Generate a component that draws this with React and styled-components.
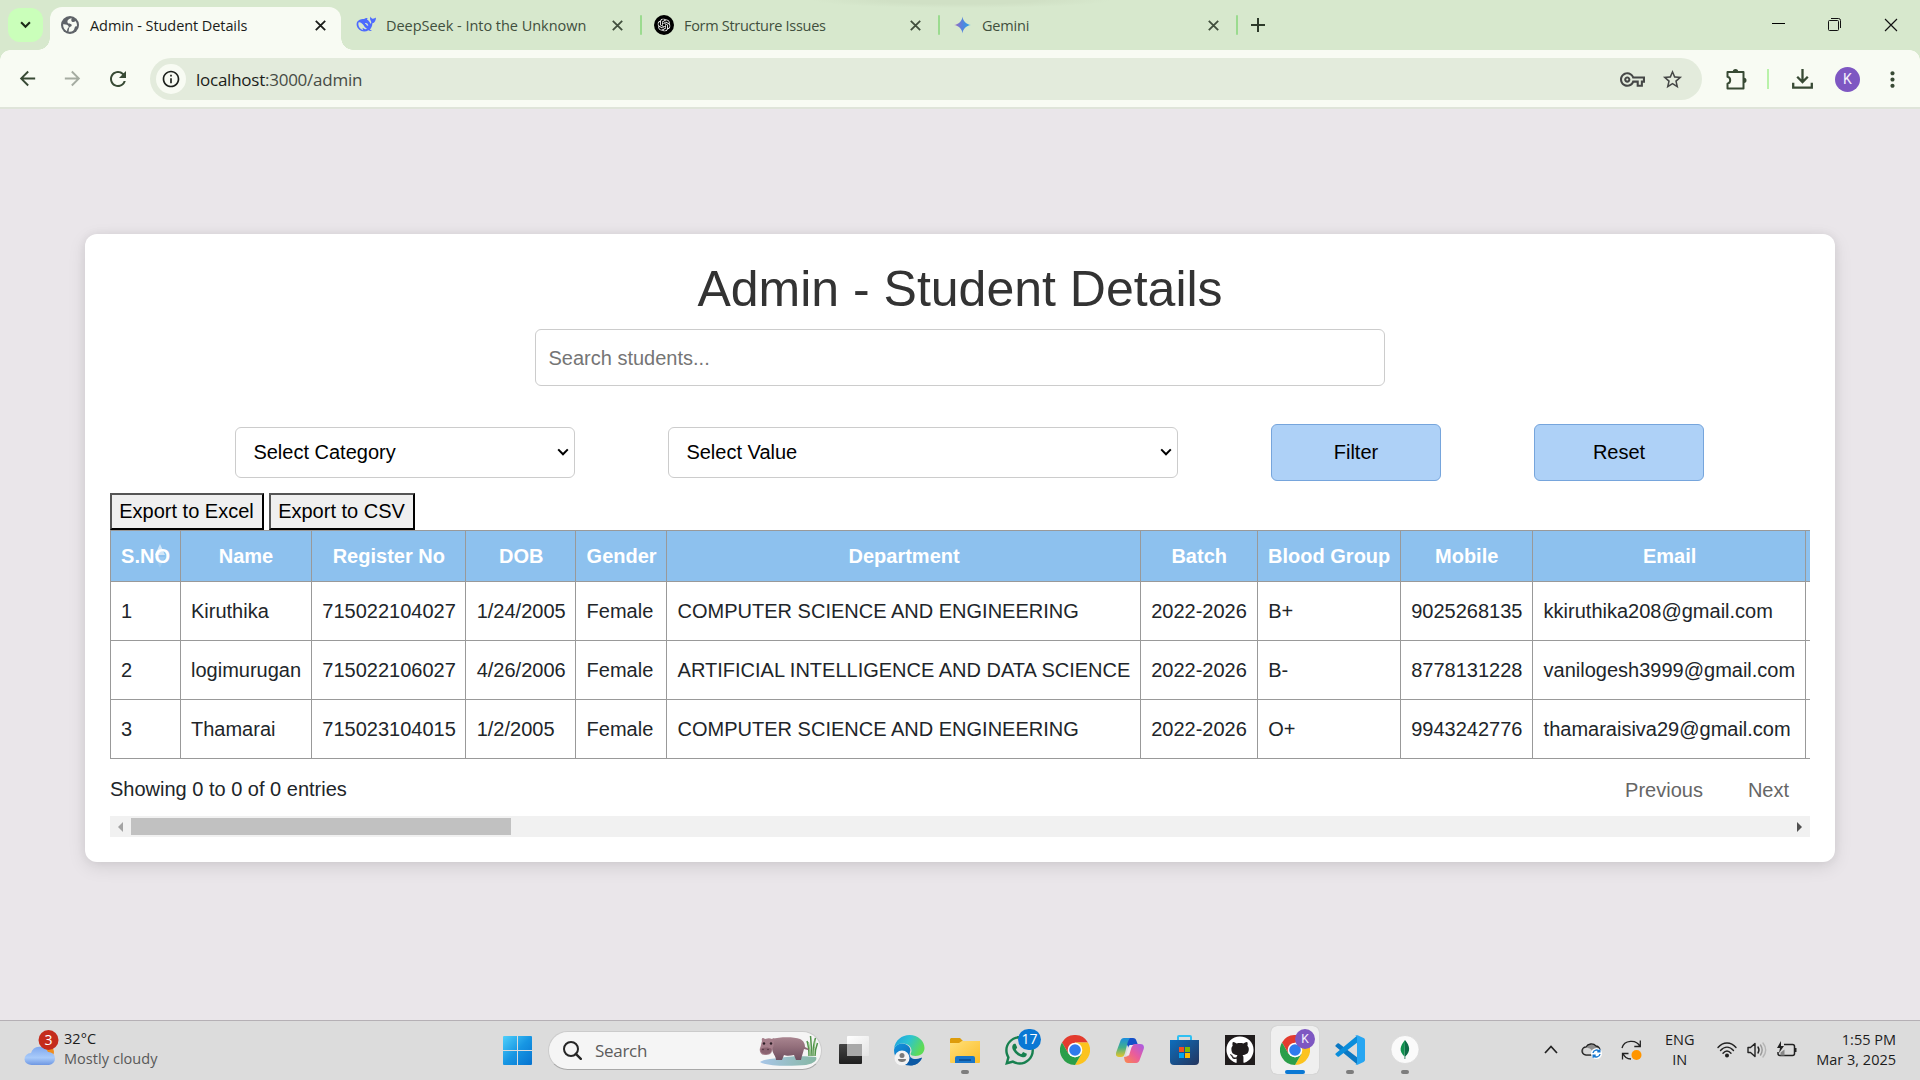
import React from 'react';
import styled, { createGlobalStyle, css } from 'styled-components';
import {
  MdArrowBack, MdArrowForward, MdRefresh, MdInfoOutline, MdStarBorder,
  MdOutlineVpnKey, MdMoreVert,
} from 'react-icons/md';
import { SiOpenai } from 'react-icons/si';
import { FaGithub, FaWhatsapp } from 'react-icons/fa';

const ui = '"Open Sans", "Noto Sans", sans-serif';
const arial = '"Liberation Sans", Arial, sans-serif';

const GlobalStyle = createGlobalStyle`
  *, *::before, *::after { box-sizing: border-box; }
  html, body { margin: 0; padding: 0; }
  body { overflow: hidden; background: #eae6ea; }
  svg { display: block; flex: none; }
`;

const Screen = styled.div`
  width: 1920px;
  height: 1080px;
  display: flex;
  flex-direction: column;
  overflow: hidden;
  background: #eae6ea;
`;

/* ---------- Browser frame ---------- */

const TabStrip = styled.header`
  height: 50px;
  flex: none;
  display: flex;
  align-items: flex-start;
  padding-left: 8px;
  background: radial-gradient(ellipse 150px 8px at 962px 0, #d0e0c5 50%, transparent), #d7e8cd;
  font-family: ${ui};
`;

const TabSearch = styled.button`
  width: 35px;
  height: 34px;
  margin: 8px 7px 0 0;
  padding: 0;
  border: 0;
  border-radius: 12px;
  background: #caffba;
  display: grid;
  place-items: center;
`;

const Tab = styled.div`
  position: relative;
  width: 291px;
  height: 43px;
  margin: 7px ${(p) => (p.$active ? 5 : 0)}px 0 0;
  padding: 0 ${(p) => (p.$active ? 15.5 : 14.5)}px 7px 10px;
  display: flex;
  align-items: center;
  gap: 10px;
  font-size: 14.5px;
  color: ${(p) => (p.$active ? '#1b1d1a' : '#414f3d')};
  ${(p) => p.$active && css`
    background: #f8fbf3;
    border-radius: 12px 12px 0 0;
    &::before, &::after {
      content: '';
      position: absolute;
      bottom: 0;
      width: 12px;
      height: 12px;
    }
    &::before {
      left: -12px;
      background: radial-gradient(circle at 0 0, transparent 11.5px, #f8fbf3 12px);
    }
    &::after {
      right: -12px;
      background: radial-gradient(circle at 100% 0, transparent 11.5px, #f8fbf3 12px);
    }
  `}
`;

const Favicon = styled.span`
  width: 20px;
  height: 20px;
  display: grid;
  place-items: center;
  flex: none;
`;

const TabTitle = styled.span`
  flex: 1;
  padding-top: 2px;
  line-height: 20px;
  white-space: nowrap;
  letter-spacing: ${(p) => p.$track || 0}px;
`;

const TabDivider = styled.i`
  width: 2px;
  height: 20px;
  margin: 8px 2px 0 3px;
  margin-top: 15px;
  border-radius: 1px;
  background: #9bdb8f;
`;

const NewTab = styled.div`
  margin: 18px 0 0 11px;
`;

const WindowControls = styled.div`
  margin-left: auto;
  margin-right: 22px;
  height: 49px;
  display: flex;
  align-items: center;
  gap: 43px;
`;

const Toolbar = styled.div`
  height: 59px;
  flex: none;
  display: flex;
  align-items: center;
  padding: 1px 14px 0 16px;
  background: #f8fbf3;
  border-bottom: 2px solid #dfe4d9;
  position: relative;
  color: #384a34;
  font-family: ${ui};
  &::before, &::after {
    content: '';
    position: absolute;
    top: 0;
    width: 10px;
    height: 10px;
  }
  &::before {
    left: 0;
    background: radial-gradient(circle at 100% 100%, transparent 9.5px, #d7e8cd 10px);
  }
  &::after {
    right: 0;
    background: radial-gradient(circle at 0 100%, transparent 9.5px, #d7e8cd 10px);
  }
`;

const NavButtons = styled.nav`
  display: flex;
  gap: 22px;
  width: 134px;
`;

const Omnibox = styled.div`
  width: 1552px;
  height: 42px;
  border-radius: 21px;
  background: #e3ebdc;
  display: flex;
  align-items: center;
  padding: 0 18px 0 6px;
`;

const SiteInfo = styled.span`
  width: 30px;
  height: 30px;
  border-radius: 50%;
  display: grid;
  place-items: center;
  background: #f8fbf3;
  color: #1d211c;
`;

const Url = styled.span`
  flex: 1;
  margin-left: 10px;
  padding-top: 1px;
  font-size: 17px;
  line-height: 24px;
  letter-spacing: -0.25px;
  color: #474b45;
  b { font-weight: 400; color: #1b1d1a; }
`;

const OmniboxActions = styled.div`
  display: flex;
  align-items: center;
  gap: 16px;
  color: #454746;
`;

const ToolbarActions = styled.div`
  flex: 1;
  display: flex;
  align-items: center;
  padding-left: 24px;
`;

const ToolbarDivider = styled.i`
  width: 2px;
  height: 20px;
  margin: 0 23px 0 20px;
  background: #b9f2a9;
`;

const Avatar = styled.span`
  width: ${(p) => p.$size}px;
  height: ${(p) => p.$size}px;
  border-radius: 50%;
  background: #7e57c2;
  color: #f5effc;
  font: 400 ${(p) => p.$font}px/${(p) => p.$size}px Roboto, sans-serif;
  text-align: center;
`;

/* ---------- Page ---------- */

const Page = styled.main`
  flex: 1;
  padding: 125px 85px 0;
  font-family: ${arial};
  font-size: 20px;
  color: #212529;
`;

const Card = styled.section`
  height: 628px;
  padding: 25px;
  border-radius: 12px;
  background: #fff;
  box-shadow: 0 5px 18px rgba(0, 0, 0, 0.1), 0 0 10px rgba(0, 0, 0, 0.06);
  display: flex;
  flex-direction: column;
`;

const Title = styled.h1`
  margin: 0 0 10px;
  font-size: 50px;
  line-height: 60px;
  font-weight: 400;
  text-align: center;
  color: #333;
`;

const SearchInput = styled.input`
  align-self: center;
  width: 850px;
  height: 57px;
  padding: 2px 12.5px 0;
  border: 1px solid #ccc;
  border-radius: 6px;
  font: inherit;
  outline: 0;
  &::placeholder { color: #757575; opacity: 1; }
`;

const FilterRow = styled.div`
  margin: 38px 0 12px 125px;
  display: flex;
  align-items: center;
  gap: 93px;
`;

const SelectBox = styled.div`
  width: ${(p) => p.$width}px;
  height: 51px;
  padding: 0 5px 0 17.4px;
  border: 1px solid #ccc;
  border-radius: 6px;
  display: flex;
  align-items: center;
  justify-content: space-between;
  color: #000;
`;

const ActionButton = styled.button`
  width: 170px;
  height: 57px;
  border: 1px solid #76a5dc;
  border-radius: 6px;
  background: #aed1f7;
  font: inherit;
  color: #000;
`;

const ExportRow = styled.div`
  display: flex;
  gap: 5px;
  height: 37px;
`;

const ExportButton = styled.button`
  height: 37px;
  width: ${(p) => p.$width}px;
  padding: 0 1px 0 0;
  border: 2px solid;
  border-color: #555 #000 #000 #555;
  background: #efefef;
  font: inherit;
  color: #000;
  white-space: nowrap;
`;

const TableClip = styled.div`
  width: 1700px;
  overflow: hidden;
  flex: none;
`;

const Table = styled.table`
  width: 1895px;
  table-layout: fixed;
  border-collapse: separate;
  border-spacing: 0;
`;

const HeadCell = styled.th`
  position: relative;
  height: 52px;
  padding: 0 9px 0 ${(p) => 9 + p.$shift * 2}px;
  border: solid #999;
  border-width: 1px 0 1px 1px;
  background: #8dc1ee;
  color: #fff;
  text-align: center;
  font-weight: 700;
  white-space: nowrap;
`;

const Cell = styled.td`
  height: 59px;
  padding: 0 0 0 ${(p) => 10 + p.$shift}px;
  border: solid #999;
  border-width: 0 0 1px 1px;
  white-space: nowrap;
`;

const SortMark = styled.svg`
  position: absolute;
  left: 43px;
  top: 13px;
`;

const TableFooter = styled.div`
  height: 57px;
  padding: 4px 21px 0 0;
  display: flex;
  align-items: center;
`;

const PageLink = styled.a`
  margin-left: ${(p) => (p.$first ? 'auto' : '45px')};
  padding-top: 1px;
  color: #666;
`;

const ScrollTrack = styled.div`
  height: 21px;
  padding: 0 7px;
  display: flex;
  align-items: center;
  background: #f1f1f1;
`;

const ScrollThumb = styled.div`
  width: 380px;
  height: 17px;
  margin: 0 auto 0 7px;
  background: #c1c1c1;
`;

/* ---------- Taskbar ---------- */

const Taskbar = styled.footer`
  height: 60px;
  flex: none;
  display: flex;
  align-items: stretch;
  border-top: 1px solid #b5b0b5;
  background: #dcdcdc;
  font-family: ${ui};
  font-size: 14.5px;
  color: #1c1c1c;
`;

const Weather = styled.div`
  width: 490px;
  padding: 0 0 3px 24px;
  display: flex;
  align-items: center;
  gap: 4px;
`;

const Lines = styled.div`
  line-height: 20px;
  text-align: ${(p) => p.$align || 'left'};
  letter-spacing: ${(p) => p.$track || 0}px;
  white-space: nowrap;
  span { display: block; }
  .dim { color: #585858; }
`;

const Launcher = styled.div`
  display: flex;
  align-items: center;
`;

const AppSlot = styled.div`
  position: relative;
  width: 55px;
  height: 59px;
  display: flex;
  align-items: center;
  justify-content: center;
  padding-bottom: 1px;
  &::before {
    content: '';
    display: ${(p) => (p.$active ? 'block' : 'none')};
    position: absolute;
    inset: 5px 3px 6px 4px;
    border-radius: 6px;
    background: #efefef;
    box-shadow: 0 0 1px #aaa;
  }
  &::after {
    content: '';
    display: ${(p) => (p.$active || p.$running ? 'block' : 'none')};
    position: absolute;
    bottom: 6px;
    left: 50%;
    width: ${(p) => (p.$active ? 20 : 8)}px;
    height: 4px;
    border-radius: 2px;
    transform: translateX(-50%);
    background: ${(p) => (p.$active ? '#0a78d4' : '#7d7d7d')};
  }
  > svg { position: relative; }
`;

const SearchPill = styled.div`
  width: 274px;
  height: 39px;
  margin: 0 5px 1px 3px;
  padding: 0 2px 0 14px;
  border-radius: 20px;
  border: 1px solid #cbcbcb;
  border-bottom-color: #a8a8a8;
  background: #f5f5f5;
  display: flex;
  align-items: center;
  gap: 13px;
  font-size: 17px;
  letter-spacing: -0.3px;
  color: #5c5c5c;
  > span { flex: 1; }
`;

const CountBadge = styled.span`
  position: absolute;
  left: 26px;
  top: 8px;
  width: 23px;
  height: 21px;
  border-radius: 11px;
  background: #0a78d4;
  color: #fff;
  font: 400 14px/20px ${ui};
  text-align: center;
`;

const ProfileBadge = styled.span`
  position: absolute;
  left: 28px;
  top: 8px;
  display: flex;
`;

const Tray = styled.div`
  flex: 1;
  display: flex;
  align-items: center;
  padding: 0 24px 2px 0;
`;

const TrayItem = styled.div`
  margin-left: ${(p) => (p.$push ? 'auto' : `${p.$gap}px`)};
`;

/* ---------- Drawings ---------- */

const Cross = ({ size = 11, width = 1.8, color = 'currentColor' }) => (
  <svg width={size} height={size} viewBox="0 0 11 11" stroke={color} strokeWidth={width}>
    <path d="M.8.8l9.4 9.4M10.2.8L.8 10.2" />
  </svg>
);

const Chevron = ({ width = 12, color = '#000', stroke = 2 }) => (
  <svg width={width} height={width * 0.67} viewBox="0 0 12 8" fill="none" stroke={color} strokeWidth={stroke}>
    <path d="M1.2 1.4L6 6.2l4.8-4.8" />
  </svg>
);

const GlobeMark = () => (
  <svg width="18" height="18" viewBox="0 0 18 18">
    <circle cx="9" cy="9" r="9" fill="#5f6368" />
    <path fill="#f8fbf3" d="M10.800 2.200C6.500 2.600 5.600 5.800 7.200 7.200c1 .8 2.500.2 3.300 1.200.6.900-.2 2-1.300 2.400C8 11.200 8 12.800 7.600 15.700c3.700.5 5.500-1.200 6-3.600.2-1.300 1-1.900 2.300-1.700.3-2-.2-4-1.400-5.500-1 1.200-2.700 1.500-3.700.5-.7-.8-.6-2.200 0-3.200zM2.100 8.200c2.800-.2 5 .6 5.600 2.300.3 1.200-.8 1.500-1.300 2.500-.3.700-.2 1.500-.4 2.200C3.500 14 1.900 11.300 2.100 8.200z" />
  </svg>
);

const DeepSeekMark = () => (
  <svg width="20" height="19" viewBox="0 0 20 19">
    <path fill="#4d6bfe" d="M1 6C2.800 3.500 5.600 2.600 8 3l1.500-.8c.9-.5 1.900-.2 2.200.3l-.8 1.100c1.800 1 3 2.600 3.500 4.200 1.300-.5 1-2.400.2-3.400-.8-1.100-.6-2.700.1-3.800.3 1.600 1.200 2.300 2.300 2.100C18.100 2.400 19 2.200 20 1.400c0 3-1.300 5.300-3.600 5.900-.1 2.700-1 4.700-2.500 6.100.6.600 1.400.9 2.200 1.100-.9.700-2.600.5-3.600-.2-3 1.900-7 1.700-9.400-.7C.7 11.300 0 8.400 1 6z" />
    <path fill="#d7e8cd" d="M2.600 6.300c1.900-.3 3.800 1 5.200 3.200 1 1.600 2 2.900 3.300 3.300-1.600.9-3.200 0-4.300-1.100-.3 1-.2 1.800.6 2.500C3.900 13.500 1.500 9.700 2.600 6.300zM9.300 7c1.500-.3 2.900.9 3 2.700-.9.300-1.500-.1-1.900-.9-.3-.7-.8-1-1.500-1z" />
  </svg>
);

const OpenAiMark = () => (
  <svg width="20" height="20" viewBox="0 0 20 20">
    <circle cx="10" cy="10" r="10" fill="#000" />
    <SiOpenai x="3.500" y="3.500" size={13} color="#fff" />
  </svg>
);

const GeminiMark = () => (
  <svg width="17" height="18" viewBox="0 0 18 18">
    <defs>
      <linearGradient id="gem" x1="0" y1="0" x2="1" y2="0">
        <stop offset="0" stopColor="#a56bb8" />
        <stop offset=".45" stopColor="#5a80dd" />
        <stop offset="1" stopColor="#22a6e6" />
      </linearGradient>
    </defs>
    <path fill="url(#gem)" d="M9 0c.5 4.800 4 8.500 9 9-5 .5-8.500 4.200-9 9-.5-4.800-4-8.500-9-9 5-.5 8.500-4.200 9-9z" />
  </svg>
);

const Puzzle = () => (
  <svg width="21" height="21" viewBox="0 0 21 21" fill="none" stroke="#384a34" strokeWidth="2" strokeLinejoin="round">
    <path d="M1.500 3h16v16.500h-16v-4.800c3.600-.9 3.600-6 0-6.900z" />
    <path d="M6.800 2.500a2.700 2.500 0 0 1 5.400 0zM18 8.700a2.500 2.600 0 0 1 0 5.200z" fill="#384a34" stroke="none" />
  </svg>
);

const Download = () => (
  <svg width="21" height="20" viewBox="0 0 21 20" fill="none" stroke="#384a34" strokeWidth="2.300">
    <path d="M10.500 0v13M5.200 7.800l5.300 5.300 5.300-5.300M1.200 13.800v4.900h18.600v-4.900" />
  </svg>
);

const WeatherIcon = () => (
  <svg width="36" height="38" viewBox="0 0 36 38">
    <defs>
      <linearGradient id="cl" x1="0" y1="0" x2="0" y2="1">
        <stop offset="0" stopColor="#7fa8ee" />
        <stop offset=".6" stopColor="#a9cbfa" />
        <stop offset="1" stopColor="#6e97e2" />
      </linearGradient>
    </defs>
    <circle cx="24" cy="22" r="6" fill="#f08c1c" />
    <path fill="url(#cl)" d="M8 35a7 6 0 0 1-1-12 9 8.500 0 0 1 17-1 6.500 6.500 0 0 1 1 13z" />
    <circle cx="24.500" cy="10" r="10" fill="#c42b1c" />
    <text x="24.500" y="15" textAnchor="middle" fill="#fff" fontSize="14" fontFamily={ui}>3</text>
  </svg>
);

const WindowsLogo = () => (
  <svg width="29" height="29" viewBox="0 0 29 29">
    <defs>
      <linearGradient id="win" gradientUnits="userSpaceOnUse" x1="0" y1="0" x2="29" y2="29">
        <stop offset="0" stopColor="#4fd0fb" />
        <stop offset=".5" stopColor="#1796e3" />
        <stop offset="1" stopColor="#0672cf" />
      </linearGradient>
    </defs>
    <path fill="url(#win)" d="M1 0h13v14H0V1a1 1 0 0 1 1-1zM15 0h13a1 1 0 0 1 1 1v13H15zM0 15h14v14H1a1 1 0 0 1-1-1zM15 15h14v13a1 1 0 0 1-1 1H15z" />
  </svg>
);

const Magnifier = () => (
  <svg width="19" height="19" viewBox="0 0 19 19" fill="none" stroke="#252525" strokeWidth="2">
    <circle cx="8" cy="8" r="7" />
    <path d="M12.800 12.800l5 5" strokeWidth="2.400" strokeLinecap="round" />
  </svg>
);

const Hippo = () => (
  <svg width="60" height="32" viewBox="0 0 60 32">
    <defs>
      <linearGradient id="pond" x1="0" y1="0" x2="1" y2="0">
        <stop offset="0" stopColor="#a8c6e8" />
        <stop offset="1" stopColor="#86b7a4" />
      </linearGradient>
      <linearGradient id="hide" x1="0" y1="0" x2="0" y2="1">
        <stop offset="0" stopColor="#a98590" />
        <stop offset=".4" stopColor="#94707c" />
        <stop offset="1" stopColor="#6f4f60" />
      </linearGradient>
    </defs>
    <path fill="url(#pond)" d="M1 28c4-3 12-3 19-4 10-2 26-2 37-1 2 4-4 7-10 8-12 1-38 2-46-3z" />
    <path fill="none" stroke="#4f9148" strokeWidth="1.500" d="M50 22c0-8-1-12-2-15M52 22c1-9 0-15-.5-20M54 22c0-8 1-14 2.500-18M56 22c0-5 1-9 2.500-13" />
    <path fill="none" stroke="#8cc07c" strokeWidth="1" d="M51 22c-.5-7-.5-10-1.500-14M55 22c0-8 1-12 1-16" />
    <path fill="url(#hide)" d="M13 5c8-2.500 22-2.500 28 0 4 2 5 5 5 8l4 2-1 1-4-1c-1 4-2 6-3 11h-5l-2-5c-4 1-8 1-10 0l-2 5h-6c0-4-4-7-4-12z" />
    <path fill="#a67f8b" d="M3 7c-1-3 1-4 3-2 3-1 5-1 7 0 2-2 4 0 2 3 0 4-1 5-2 8 0 4-3 5-7 5-4 0-6-3-5-7 1-2 1-4 2-7z" />
    <path fill="#8a6370" d="M1.500 15c2-2 9-2 11 0 0 4-2 5-6 5s-5-2-5-5z" />
    <circle cx="5" cy="9.500" r="1.200" fill="#2d1e26" />
    <circle cx="12" cy="9.500" r="1.200" fill="#2d1e26" />
    <circle cx="4" cy="15.500" r=".8" fill="#4d303c" />
    <circle cx="9" cy="15.500" r=".8" fill="#4d303c" />
  </svg>
);

const TaskView = () => (
  <svg width="31" height="29" viewBox="0 0 31 29">
    <defs>
      <linearGradient id="tv" x1="0" y1="0" x2="0" y2="1">
        <stop offset="0" stopColor="#454545" /><stop offset="1" stopColor="#1f1f1f" />
      </linearGradient>
      <linearGradient id="tw" x1="0" y1="0" x2="1" y2="1">
        <stop offset="0" stopColor="#fff" /><stop offset="1" stopColor="#e4e4e4" />
      </linearGradient>
    </defs>
    <rect x="0" y="8" width="23" height="20" rx="1" fill="url(#tv)" />
    <rect x="8" y="0" width="22" height="20" rx="1" fill="url(#tw)" />
    <rect x="8" y="8" width="15" height="12" fill="#a9a9a9" />
  </svg>
);

const Edge = () => (
  <svg width="31" height="31" viewBox="0 0 31 31">
    <defs>
      <linearGradient id="e1" x1="0" y1="0" x2="1" y2=".4">
        <stop offset="0" stopColor="#1b9de2" /><stop offset=".5" stopColor="#2cc3d2" /><stop offset="1" stopColor="#5edb56" />
      </linearGradient>
      <linearGradient id="e2" x1="0" y1="0" x2="1" y2="1">
        <stop offset="0" stopColor="#1396e0" /><stop offset="1" stopColor="#0b4f9f" />
      </linearGradient>
    </defs>
    <path fill="url(#e2)" d="M0 15c1-6 8-8 13-5 3 2 4 4 3 7-2 6 4 9 12 6-2 5-7 7.500-12 7.500C7 30.500 0 24 0 15z" />
    <path fill="#0c59a4" d="M12 18c0 6 8 8 16 4.500C25 29 20 31 15 30c-4-2-5-8-3-12z" />
    <path fill="url(#e1)" d="M0 14C1 5 8 0 15.500 0 24 0 30.500 6 30.500 13c0 5-4 8-9 8-3 0-5-1-5-2 0-.8 1-1.200 1-3.500C17.500 11 13 8.500 8.500 8.500 4 8.500 1 11 0 14z" />
    <circle cx="8" cy="23" r="7.500" fill="#f3f3f3" />
    <circle cx="8" cy="20.500" r="2.500" fill="#7a7a7a" />
    <path fill="#7a7a7a" d="M4 24h8c.6 4-8.600 4-8 0z" />
  </svg>
);

const Folder = () => (
  <svg width="30" height="27" viewBox="0 0 30 27">
    <defs>
      <linearGradient id="fo" x1="0" y1="0" x2="1" y2="1">
        <stop offset="0" stopColor="#ffe07a" /><stop offset="1" stopColor="#fcbd28" />
      </linearGradient>
    </defs>
    <path fill="#dd9c0b" d="M1 1h9l3 3h16v6H0V2z" />
    <path fill="url(#fo)" d="M0 6h9l3-2h18v21a1 1 0 0 1-1 1H1a1 1 0 0 1-1-1z" />
    <path fill="#1976c9" d="M5 26v-5a2 2 0 0 1 2-2h16a2 2 0 0 1 2 2v5z" />
    <path fill="#0c559d" d="M9 22h12v2H9z" />
  </svg>
);

const ChromeMark = () => (
  <svg width="30" height="30" viewBox="0 0 30 30">
    <path fill="#e33b2e" d="M2 7.500A15 15 0 0 1 28 7.500H15v7.500l-6.500 3.750z" />
    <path fill="#fcc31e" d="M28 7.500A15 15 0 0 1 15 30l6.500-11.250L15 7.500z" />
    <path fill="#2a9e49" d="M2 7.500l6.500 11.250L15 22.500l6.500-3.750L15 30A15 15 0 0 1 2 7.500z" />
    <circle cx="15" cy="15" r="7.300" fill="#fff" />
    <circle cx="15" cy="15" r="5.800" fill="#2f7bed" />
  </svg>
);

const Copilot = () => (
  <svg width="28" height="25" viewBox="0 0 28 25">
    <defs>
      <linearGradient id="c1" x1="0" y1="0" x2="0" y2="1">
        <stop offset="0" stopColor="#1a8ee0" /><stop offset=".5" stopColor="#44b08a" /><stop offset="1" stopColor="#e8c52a" />
      </linearGradient>
      <linearGradient id="c2" x1="1" y1="0" x2="0" y2="1">
        <stop offset="0" stopColor="#a55ce8" /><stop offset=".5" stopColor="#ea5c9c" /><stop offset="1" stopColor="#fb8a4a" />
      </linearGradient>
    </defs>
    <path fill="#1550c8" d="M8 0h9c2 0 3 1 3.500 3L22 7h-5c-3 0-3 2-4 4z" />
    <path fill="url(#c1)" d="M8 0h6c-1 1-2 3-3 7l-2 8c-1 3-2 4-4 4H3c-3 0-3.500-2-2.700-5L4 4c.7-2.500 2-4 4-4z" />
    <path fill="url(#c2)" d="M19 6h5c3.500 0 4.500 2 3.700 5L24 21c-.7 2.500-2 4-4 4h-8c-2 0-3-1-3.500-3L8 19c3 0 4-1 5-4l2-6c.7-2 2-3 4-3z" />
    <path fill="#eee6ef" d="M14 7h3.500c-1.500 1-2 2-2.500 4l-2 6.500h-3l2-7c.4-1.800.8-3 2-3.500z" />
  </svg>
);

const Store = () => (
  <svg width="29" height="30" viewBox="0 0 29 30">
    <defs>
      <linearGradient id="st" x1="0" y1="0" x2="1" y2="1">
        <stop offset="0" stopColor="#0d6ebd" /><stop offset="1" stopColor="#24355e" />
      </linearGradient>
    </defs>
    <path fill="none" stroke="#30c0f2" strokeWidth="2" d="M8 6V2a1 1 0 0 1 1-1h11a1 1 0 0 1 1 1v4" />
    <path fill="url(#st)" d="M0 5h29v21a4 4 0 0 1-4 4H4a4 4 0 0 1-4-4z" />
    <path fill="#f25022" d="M9 12h5v5H9z" />
    <path fill="#7fba00" d="M15 12h5v5h-5z" />
    <path fill="#00a4ef" d="M9 18h5v5H9z" />
    <path fill="#ffb900" d="M15 18h5v5h-5z" />
  </svg>
);

const GithubTile = () => (
  <svg width="30" height="30" viewBox="0 0 30 30">
    <rect width="30" height="30" fill="#1f1b1c" />
    <FaGithub x="1" y="1" size={28} color="#fff" />
  </svg>
);

const VsCode = () => (
  <svg width="30" height="30" viewBox="0 0 30 30">
    <path fill="#0b78c3" d="M.6 10.300l1.900-1.700c.4-.4 1-.4 1.500-.1L22 22.300v6.900L.6 11.600c-.4-.4-.4-.9 0-1.300z" />
    <path fill="#0a8ddb" d="M.6 19.700l1.900 1.700c.4.400 1 .4 1.500.1L22 7.700V.8L.6 18.400c-.4.400-.4.900 0 1.300z" />
    <path fill="#27a6f2" d="M21.500 29.800c-.7-.2-1-.5-1.500-1 .8.700 2 .2 2-.9V2.100c0-1.100-1.200-1.600-2-.9.700-.9 1.500-1.300 2.600-.9l6 2.800c.8.400 1.400 1.200 1.400 2.100v19.600c0 .9-.6 1.700-1.400 2.100l-6 2.900c-.4.200-.8.200-1.100 0z" />
  </svg>
);

const Mongo = () => (
  <svg width="30" height="30" viewBox="0 0 30 30">
    <circle cx="15" cy="14.500" r="14" fill="#fafafa" stroke="#cfcfcf" strokeWidth=".5" />
    <path fill="#10914f" d="M15 5c-5 6-6.500 11-.5 16.500z" />
    <path fill="#0c6b45" d="M15 5c5 6 6 11 .3 16.500V24h-.8z" />
  </svg>
);

const OneDrive = () => (
  <svg width="22" height="18" viewBox="0 0 22 18">
    <path fill="#8e8e8e" stroke="#222" strokeWidth="1.300" d="M5 14a4 4 0 0 1 0-8 6 5.500 0 0 1 10-1 4.500 4.500 0 0 1 4 5c0 2-2 4-4 4z" />
    <path fill="#d8d8d8" d="M5 13.300a3.300 3.300 0 0 1 0-6.500c4 0 6 2 8 6.500z" />
    <circle cx="15.500" cy="12.500" r="5.500" fill="#fff" />
    <path fill="none" stroke="#1777cf" strokeWidth="1.400" d="M12 12a3.600 3.600 0 0 1 6.500-1.500M19 13a3.600 3.600 0 0 1-6.500 1.500M18.800 8.300v2.500h-2.500M12.200 16.700v-2.500h2.500" />
  </svg>
);

const UpdateIcon = () => (
  <svg width="21" height="22" viewBox="0 0 21 22" fill="none" stroke="#222" strokeWidth="1.300">
    <path d="M1 9A9.500 8.500 0 0 1 19 7.500M19.300 1.500v6h-6M2 14.500a9 8 0 0 0 8 5.500M7.500 14.500h-6v6" />
    <circle cx="15.500" cy="16" r="5" fill="#ff9500" stroke="none" />
  </svg>
);

const Wifi = () => (
  <svg width="20" height="16" viewBox="0 0 20 16" fill="none" stroke="#222" strokeWidth="1.400" strokeLinecap="round">
    <path d="M1 5.500c5-6 13-6 18 0M3.500 8.500c4-4.500 9-4.500 13 0M6 11.300c2.500-3 5.500-3 8 0" />
    <circle cx="10" cy="13.500" r="1.300" fill="#222" />
  </svg>
);

const Speaker = () => (
  <svg width="20" height="18" viewBox="0 0 20 18" fill="none" stroke="#222" strokeWidth="1.400" strokeLinecap="round" strokeLinejoin="round">
    <path d="M1 6.500h2.500L8 2.500v13l-4.500-4H1z" />
    <path d="M11 6c1.200 1.800 1.200 4.200 0 6" />
    <path stroke="#999" d="M13.500 4c2 3 2 7 0 10" />
    <path stroke="#b5b5b5" d="M16 2c3.300 4.300 3.300 9.700 0 14" />
  </svg>
);

const Battery = () => (
  <svg width="21" height="17" viewBox="0 0 21 17" fill="none" stroke="#222" strokeWidth="1.500">
    <path d="M8 3.500h8.500a2 2 0 0 1 2 2v7a2 2 0 0 1-2 2H4a2 2 0 0 1-2-2V11" />
    <path d="M19.500 7v4" strokeWidth="2" />
    <path d="M5 0L1 7h3l-1 5 5-7H5z" fill="#222" stroke="none" />
    <path d="M4.500 14.500v-3l4-3v6z" fill="#888" stroke="none" />
  </svg>
);

/* ---------- Data ---------- */

const tabs = [
  { title: 'Admin - Student Details', icon: <GlobeMark />, track: -0.08, active: true },
  { title: 'DeepSeek - Into the Unknown', icon: <DeepSeekMark />, track: -0.03 },
  { title: 'Form Structure Issues', icon: <OpenAiMark />, track: -0.3 },
  { title: 'Gemini', icon: <GeminiMark />, track: -0.2 },
];

const columns = [
  { name: 'S.NO', width: 70, shift: 0 },
  { name: 'Name', width: 131, shift: 0 },
  { name: 'Register No', width: 154, shift: 0.3 },
  { name: 'DOB', width: 110, shift: 0.7 },
  { name: 'Gender', width: 91, shift: 0.6 },
  { name: 'Department', width: 474, shift: 0.6 },
  { name: 'Batch', width: 117, shift: 0.2 },
  { name: 'Blood Group', width: 143, shift: 0.2 },
  { name: 'Mobile', width: 132, shift: 0.2 },
  { name: 'Email', width: 273, shift: 0.6 },
  { name: '', width: 200, shift: 0 },
];

const rows = [
  ['1', 'Kiruthika', '715022104027', '1/24/2005', 'Female', 'COMPUTER SCIENCE AND ENGINEERING', '2022-2026', 'B+', '9025268135', 'kkiruthika208@gmail.com', ''],
  ['2', 'logimurugan', '715022106027', '4/26/2006', 'Female', 'ARTIFICIAL INTELLIGENCE AND DATA SCIENCE', '2022-2026', 'B-', '8778131228', 'vanilogesh3999@gmail.com', ''],
  ['3', 'Thamarai', '715023104015', '1/2/2005', 'Female', 'COMPUTER SCIENCE AND ENGINEERING', '2022-2026', 'O+', '9943242776', 'thamaraisiva29@gmail.com', ''],
];

const apps = [
  { icon: <TaskView /> },
  { icon: <Edge /> },
  { icon: <Folder />, running: true },
  { icon: <FaWhatsapp size={33} color="#17804f" />, badge: <CountBadge>17</CountBadge> },
  { icon: <ChromeMark /> },
  { icon: <Copilot /> },
  { icon: <Store /> },
  { icon: <GithubTile /> },
  { icon: <ChromeMark />, active: true, badge: <ProfileBadge><Avatar $size={20} $font={12}>K</Avatar></ProfileBadge> },
  { icon: <VsCode />, running: true },
  { icon: <Mongo />, running: true },
];

function BrowserChrome() {
  return (
    <>
      <TabStrip>
        <TabSearch><Chevron width={11} color="#1b2a18" stroke={2.3} /></TabSearch>
        {tabs.map((t) => (
          <React.Fragment key={t.title}>
            <Tab $active={t.active}>
              <Favicon>{t.icon}</Favicon>
              <TabTitle $track={t.track}>{t.title}</TabTitle>
              <Cross />
            </Tab>
            {!t.active && <TabDivider />}
          </React.Fragment>
        ))}
        <NewTab>
          <svg width="14" height="14" viewBox="0 0 14 14" stroke="#2d3a2a" strokeWidth="2"><path d="M7 0v14M0 7h14" /></svg>
        </NewTab>
        <WindowControls>
          <svg width="13" height="13" viewBox="0 0 13 13"><path d="M0 5h13v1H0z" /></svg>
          <svg width="13" height="13" viewBox="0 0 13 13" fill="none" stroke="#111">
            <rect x=".5" y="2.500" width="10" height="10" rx="1" />
            <path d="M3 .5h7.500a2 2 0 0 1 2 2V10" />
          </svg>
          <Cross size={14} width={0.9} color="#111" />
        </WindowControls>
      </TabStrip>
      <Toolbar>
        <NavButtons>
          <MdArrowBack size={23} />
          <MdArrowForward size={23} color="#a5aca1" />
          <MdRefresh size={24} />
        </NavButtons>
        <Omnibox>
          <SiteInfo><MdInfoOutline size={20} /></SiteInfo>
          <Url><b>localhost</b>:3000/admin</Url>
          <OmniboxActions>
            <MdOutlineVpnKey size={25} />
            <MdStarBorder size={23} />
          </OmniboxActions>
        </Omnibox>
        <ToolbarActions>
          <Puzzle />
          <ToolbarDivider />
          <Download />
          <TrayItem $gap={22}><Avatar as="div" $size={25} $font={14}>K</Avatar></TrayItem>
          <TrayItem $gap={20}><MdMoreVert size={25} /></TrayItem>
        </ToolbarActions>
      </Toolbar>
    </>
  );
}

function StudentTable() {
  return (
    <TableClip>
      <Table>
        <colgroup>
          {columns.map((c) => <col key={c.name} width={c.width} />)}
        </colgroup>
        <thead>
          <tr>
            {columns.map((c, i) => (
              <HeadCell key={c.name} $shift={c.shift}>
                {c.name}
                {i === 0 && (
                  <SortMark width="12" height="24" viewBox="0 0 12 24">
                    <path d="M6 0l5 11H1z" fill="#fff" opacity=".6" />
                    <path d="M6 24l5-11H1z" fill="#fff" opacity=".15" />
                  </SortMark>
                )}
              </HeadCell>
            ))}
          </tr>
        </thead>
        <tbody>
          {rows.map((r) => (
            <tr key={r[0]}>
              {r.map((cell, i) => <Cell key={i} $shift={columns[i].shift}>{cell}</Cell>)}
            </tr>
          ))}
        </tbody>
      </Table>
    </TableClip>
  );
}

export default function App() {
  return (
    <Screen>
      <GlobalStyle />
      <BrowserChrome />
      <Page>
        <Card>
          <Title>Admin - Student Details</Title>
          <SearchInput placeholder="Search students..." />
          <FilterRow>
            <SelectBox $width={340}>Select Category<Chevron /></SelectBox>
            <SelectBox $width={510}>Select Value<Chevron /></SelectBox>
            <ActionButton>Filter</ActionButton>
            <ActionButton>Reset</ActionButton>
          </FilterRow>
          <ExportRow>
            <ExportButton $width={154}>Export to Excel</ExportButton>
            <ExportButton $width={146}>Export to CSV</ExportButton>
          </ExportRow>
          <StudentTable />
          <TableFooter>
            Showing 0 to 0 of 0 entries
            <PageLink $first>Previous</PageLink>
            <PageLink>Next</PageLink>
          </TableFooter>
          <ScrollTrack>
            <svg width="7" height="10" viewBox="0 0 7 10"><path d="M6 0v10L1 5z" fill="#a3a3a3" /></svg>
            <ScrollThumb />
            <svg width="7" height="10" viewBox="0 0 7 10"><path d="M1 0v10l5-5z" fill="#505050" /></svg>
          </ScrollTrack>
        </Card>
      </Page>
      <Taskbar>
        <Weather>
          <WeatherIcon />
          <Lines $track={0.05}><span>32°C</span><span className="dim">Mostly cloudy</span></Lines>
        </Weather>
        <Launcher>
          <AppSlot><WindowsLogo /></AppSlot>
          <SearchPill><Magnifier /><span>Search</span><Hippo /></SearchPill>
          {apps.map((a, i) => (
            <AppSlot key={i} $active={a.active} $running={a.running}>{a.icon}{a.badge}</AppSlot>
          ))}
        </Launcher>
        <Tray>
          <TrayItem $gap={112}>
            <svg width="14" height="9" viewBox="0 0 14 9" fill="none" stroke="#222" strokeWidth="1.700"><path d="M1 8l6-6.500L13 8" /></svg>
          </TrayItem>
          <TrayItem $gap={23}><OneDrive /></TrayItem>
          <TrayItem $gap={18}><UpdateIcon /></TrayItem>
          <TrayItem $gap={23}><Lines $align="center"><span>ENG</span><span>IN</span></Lines></TrayItem>
          <TrayItem $gap={22}><Wifi /></TrayItem>
          <TrayItem $gap={10}><Speaker /></TrayItem>
          <TrayItem $gap={9}><Battery /></TrayItem>
          <TrayItem $push>
            <Lines $align="right"><span>1:55 PM</span><span>Mar 3, 2025</span></Lines>
          </TrayItem>
        </Tray>
      </Taskbar>
    </Screen>
  );
}
